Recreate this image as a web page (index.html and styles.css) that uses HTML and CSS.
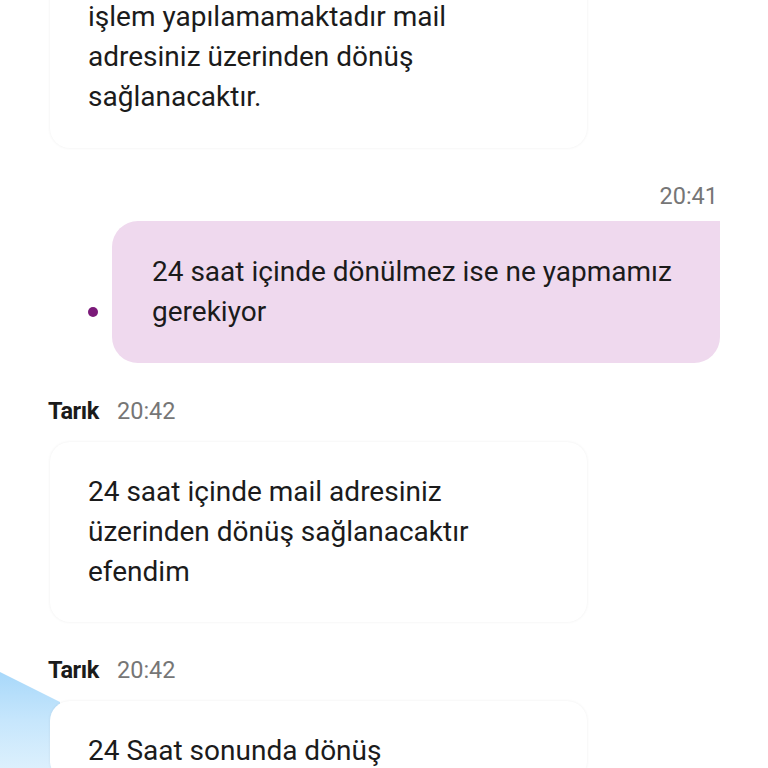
FILE: index.html
```html
<!DOCTYPE html>
<html lang="tr">
<head>
<meta charset="utf-8">
<title>Sohbet</title>
<link rel="stylesheet" href="styles.css">
</head>
<body>
<div class="deco"></div>
<main class="chat">
  <div class="bubble agent first">
    <p>işlem yapılamamaktadır mail<br>adresiniz üzerinden dönüş<br>sağlanacaktır.</p>
  </div>

  <div class="meta right"><span class="time">20:41</span></div>
  <div class="user-row">
    <span class="dot"></span>
    <div class="bubble user">
      <p>24 saat içinde dönülmez ise ne yapmamız gerekiyor</p>
    </div>
  </div>

  <div class="meta"><span class="name">Tarık</span><span class="time">20:42</span></div>
  <div class="bubble agent">
    <p>24 saat içinde mail adresiniz<br>üzerinden dönüş sağlanacaktır<br>efendim</p>
  </div>

  <div class="meta"><span class="name">Tarık</span><span class="time">20:42</span></div>
  <div class="bubble agent last">
    <p>24 Saat sonunda dönüş</p>
  </div>
</main>
</body>
</html>
```
FILE: styles.css
```css
html, body {
  margin: 0;
  padding: 0;
  background: #ffffff;
  height: 768px;
  overflow: hidden;
}
body {
  font-family: Roboto, "Noto Sans", "Liberation Sans", sans-serif;
  color: #1b1b1b;
  position: relative;
}
.deco {
  position: absolute;
  left: 0;
  top: 672px;
  width: 60px;
  height: 96px;
  background: linear-gradient(180deg, #a8d8fa 0%, #c6e6fc 50%, #dcf0fd 100%);
  clip-path: polygon(0 0, 100% 30px, 100% 100%, 0 100%);
  z-index: 0;
}
.chat {
  position: relative;
  z-index: 1;
  display: flex;
  flex-direction: column;
  margin-top: -33px;
  padding: 0 48px 0 50px;
}
.bubble {
  box-sizing: border-box;
  border-radius: 20px;
  padding: 30px 38px;
}
.bubble p {
  margin: 0;
  font-size: 28px;
  line-height: 40px;
  letter-spacing: 0;
}
.agent {
  width: 537px;
  background: #ffffff;
  box-shadow: 0 0 3px rgba(0, 0, 0, 0.07);
}
.first {
  padding-bottom: 31px;
}
.last {
  padding-bottom: 10px;
}
.meta {
  display: flex;
  align-items: center;
  gap: 18px;
  height: 28px;
  margin: 34px 0 17px -2px;
  font-size: 23.5px;
}
.meta.right {
  justify-content: flex-end;
  margin: 34px 2px 11px 0;
}
.name {
  font-weight: 700;
  color: #1b1b1b;
  letter-spacing: -0.4px;
}
.time {
  color: #767676;
}
.user-row {
  display: flex;
  align-items: center;
  gap: 14px;
  margin-left: 38px;
  margin-right: 0;
}
.dot {
  width: 10px;
  height: 10px;
  border-radius: 50%;
  background: #7b1a79;
  margin-top: 40px;
}
.user {
  width: 608px;
  background: #efd9ee;
  border-radius: 26px 0 26px 26px;
  padding: 31px 40px;
}
```
